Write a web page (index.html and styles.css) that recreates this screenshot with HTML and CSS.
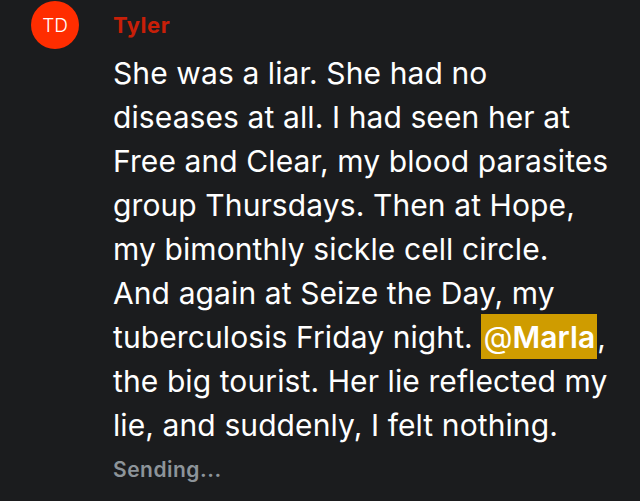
FILE: index.html
```html
<!DOCTYPE html>
<html>
<head>
<meta charset="utf-8">
<link rel="stylesheet" href="styles.css">
</head>
<body>
<div class="message">
  <div class="avatar">TD</div>
  <div class="content">
    <div class="author">Tyler</div>
    <div class="text">She was a liar. She had no<br>diseases at all. I had seen her at<br>Free and Clear, my blood parasites<br>group Thursdays. Then at Hope,<br>my bimonthly sickle cell circle.<br>And again at Seize the Day, my<br>tuberculosis Friday night. <span class="mention"><span class="at">@</span>Marla</span>,<br>the big tourist. Her lie reflected my<br>lie, and suddenly, I felt nothing.</div>
    <div class="status">Sending...</div>
  </div>
</div>
</body>
</html>
```
FILE: styles.css
```css
html, body {
  margin: 0;
  padding: 0;
  background: #1b1c1e;
  height: 100%;
}
body {
  font-family: Inter, "Noto Sans", sans-serif;
  overflow: hidden;
}
.message {
  display: flex;
  padding: 1px 0 0 31px;
  gap: 34px;
}
.avatar {
  flex: none;
  width: 48px;
  height: 48px;
  border-radius: 50%;
  background: #ff2d00;
  color: #fff;
  font-size: 19px;
  font-weight: 300;
  display: flex;
  align-items: center;
  justify-content: center;
}
.content {
  width: 540px;
  white-space: nowrap;
}
.author {
  color: #c81f08;
  font-weight: 700;
  font-size: 22px;
  line-height: 26px;
  letter-spacing: 0.5px;
  margin-top: 11px;
}
.text {
  color: #fff;
  font-size: 30px;
  line-height: 44px;
  margin-top: 13px;
  letter-spacing: 0.1px;
}
.mention {
  background: #cf9c00;
  font-weight: 600;
  padding: 5px 2px 4px 2px;
}
.mention .at {
  font-weight: 400;
}
.status {
  color: #8d949a;
  font-weight: 600;
  font-size: 21px;
  line-height: 24px;
  letter-spacing: 0.5px;
  margin-top: 11px;
}
```
